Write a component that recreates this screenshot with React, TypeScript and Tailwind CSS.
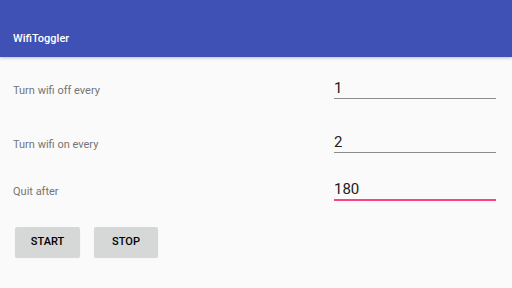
import React from "react";

function Row({ label, value, active, mt }: { label: string; value: string; active?: boolean; mt: string }) {
  return (
    <div className={`flex items-center justify-between pl-[13px] pr-[16px] ${mt}`}>
      <span className="text-[11px] leading-[14px] pt-[4px] text-[#757575]">{label}</span>
      <div
        className={`w-[162px] text-[15px] leading-[20px] text-[#212121] ${
          active ? "h-[22px] border-b-2 border-[#FF4081]" : "h-[21px] border-b border-[#8c8c8c]"
        }`}
      >
        {value}
      </div>
    </div>
  );
}

export default function App() {
  return (
    <div className="w-[512px] h-[288px] bg-[#FAFAFA] overflow-hidden" style={{ fontFamily: "Roboto, 'Noto Sans', sans-serif" }}>
      <div className="h-[57px] bg-[#3F51B5] pt-[31px] pl-[13px] shadow-[0_1px_3px_rgba(0,0,0,0.25)] relative z-10">
        <div className="text-[11px] leading-[16px] font-medium text-white">WifiToggler</div>
      </div>
      <Row label="Turn wifi off every" value="1" mt="mt-[21px]" />
      <Row label="Turn wifi on every" value="2" mt="mt-[33px]" />
      <Row label="Quit after" value="180" active mt="mt-[26px]" />
      <div className="flex gap-[14px] pl-[15px] mt-[26px]">
        <button className="w-[65px] h-[30px] bg-[#D6D7D7] rounded-[2px] text-[11px] font-medium text-black shadow-[0_1px_1px_rgba(0,0,0,0.15)]">
          START
        </button>
        <button className="w-[64px] h-[30px] bg-[#D6D7D7] rounded-[2px] text-[11px] font-medium text-black shadow-[0_1px_1px_rgba(0,0,0,0.15)]">
          STOP
        </button>
      </div>
    </div>
  );
}
